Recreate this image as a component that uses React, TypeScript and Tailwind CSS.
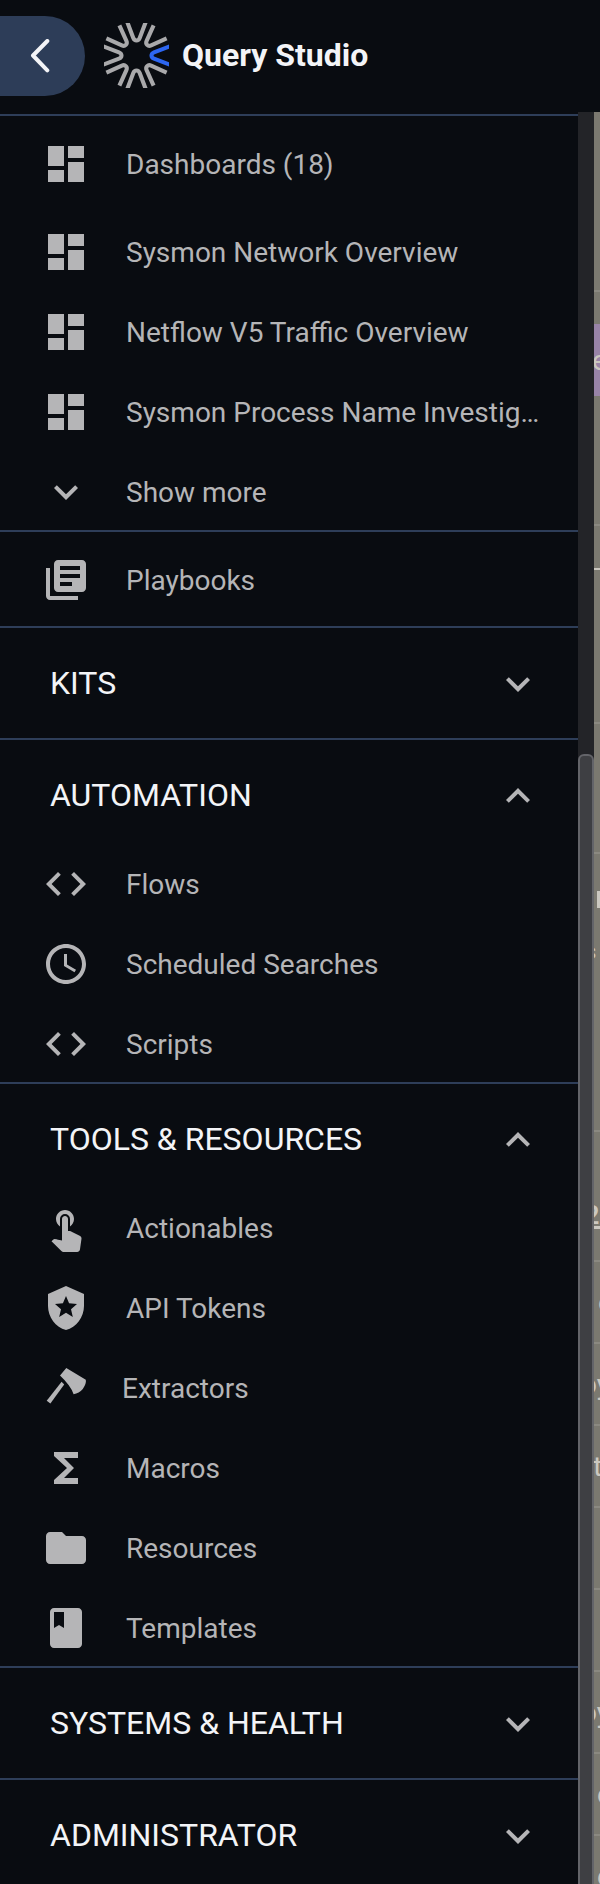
import type { ReactNode } from "react";
import {
  MdBook,
  MdCode,
  MdDashboard,
  MdExpandLess,
  MdExpandMore,
  MdFolder,
  MdFunctions,
  MdLibraryBooks,
  MdLocalPolice,
  MdSchedule,
  MdTouchApp,
} from "react-icons/md";

const ICON = "size-12 shrink-0";

function AxeIcon() {
  return (
    <svg viewBox="0 0 48 48" className={ICON} fill="currentColor">
      <path d="M24.3 4L43.8 15.8Q44.6 19.5 40.8 25Q37 29.3 31.6 30.2Q28.5 21.5 18 11.6Z" />
      <path d="M19.6 17.8L22.2 20.4L8.4 39.5L4.7 36.7Z" />
    </svg>
  );
}

const RAY = "M33.4 -9.2L17.5 -3.2C14.2 -1.9 14.2 1.9 17.5 3.2L33.4 9.2";

function Logo() {
  return (
    <svg viewBox="-32.5 -32.5 65 65" className="size-[65px] overflow-hidden" fill="none" strokeWidth="4.1">
      {[45, 90, 135, 180, 225, 270, 315, 0].map((angle) => (
        <path key={angle} d={RAY} transform={`rotate(${angle})`} stroke={angle === 0 ? "#2d66f0" : "#a9a9ab"} />
      ))}
    </svg>
  );
}

function Item({ icon, label, last, gap = "gap-9" }: { icon: ReactNode; label: string; last?: boolean; gap?: string }) {
  return (
    <div className={`flex items-center pl-[42px] pr-9 text-[#b5b5b7] ${gap} ${last ? "h-[78px] pt-0.5" : "h-20"}`}>
      {icon}
      <span className="truncate pt-0.5 text-[28px] leading-10">{label}</span>
    </div>
  );
}

function SectionTitle({ title, open }: { title: string; open?: boolean }) {
  return (
    <div className={`flex items-center justify-between pl-[50px] pr-9 ${open ? "h-[104px] pt-2" : "h-[110px] pt-0.5"}`}>
      <span className="pb-0.5 text-[32px] leading-10 text-[#f3f4f7]">{title}</span>
      {open ? <MdExpandLess className="size-12 text-[#b5b5b7]" /> : <MdExpandMore className="size-12 text-[#b5b5b7]" />}
    </div>
  );
}

function Group({ children, className = "" }: { children: ReactNode; className?: string }) {
  return <section className={`border-b-2 border-[#2e3e59] ${className}`}>{children}</section>;
}

function TableCell({ text, indent = "" }: { text?: string; indent?: string }) {
  return (
    <div className="h-[82px] shrink-0 border-b-2 border-[#8b8981] pt-[25px]">
      {text && <span className={`block text-[28px] leading-8 ${indent}`}>{text}</span>}
    </div>
  );
}

function PageBehind() {
  return (
    <div className="flex w-1.5 flex-col overflow-hidden bg-[#7b7970] text-[#cbc8c0]">
      <div className="h-[180px] shrink-0 border-b-2 border-[#8b8981]" />
      <div className="mt-8 flex h-[72px] shrink-0 items-center bg-[#9984a8] pt-0.5">
        <span className="-ml-0.5 text-[28px] leading-8">e</span>
      </div>
      <div className="h-[130px] shrink-0 border-b-2 border-[#8b8981]" />
      <div className="h-11 shrink-0 border-b-2 border-[#cbc8c0]" />
      <div className="h-[154px] shrink-0 border-b-2 border-[#8b8981]" />
      <div className="h-[130px] shrink-0 border-b-2 border-[#8b8981]" />
      <div className="flex h-[278px] shrink-0 flex-col gap-7 border-b-2 border-[#8b8981] pt-[37px]">
        <div className="ml-[3px] h-[17px] w-[3px] bg-[#cbc8c0]" />
        <span className="-ml-[9px] text-[22px] leading-8">s</span>
      </div>
      <div className="h-[130px] shrink-0 border-b-2 border-[#8b8981] pt-[72px]">
        <div className="border-b-[3px] border-[#cbc8c0]">
          <span className="-ml-[9px] block pt-0.5 text-[25px] font-bold leading-5">2</span>
        </div>
      </div>
      <TableCell text="o" indent="ml-1" />
      <TableCell text="oy" indent="-ml-[13px]" />
      <TableCell text="t" indent="-ml-px" />
      <TableCell />
      <TableCell />
      <TableCell text="oy" indent="-ml-[13px]" />
      <TableCell text="o" indent="ml-[3px]" />
      <TableCell text="o" indent="ml-[3px]" />
    </div>
  );
}

export default function App() {
  return (
    <div className="flex h-[1884px] w-[600px] flex-col overflow-hidden bg-[#090c11] font-[Roboto,sans-serif]">
      <header className="flex h-28 shrink-0 items-center">
        <button className="flex h-20 w-[85px] items-center rounded-r-full bg-[#2d3d58] pl-[30px]" aria-label="Back">
          <svg viewBox="0 0 20 34" className="h-[34px] w-5" fill="none" stroke="#f3f4f7" strokeWidth="4" strokeLinecap="round" strokeLinejoin="round">
            <path d="M17.3 2L3 16.5L17.3 31.3" />
          </svg>
        </button>
        <div className="ml-[19px] flex items-center gap-[13px] pb-px">
          <Logo />
          <h1 className="pb-px text-[32px] font-bold leading-10 text-[#f3f4f7]">Query Studio</h1>
        </div>
      </header>
      <div className="flex min-h-0 flex-1">
        <nav className="w-[578px] overflow-hidden pt-0.5">
          <Group className="border-t-2">
            <div className="pb-2 pt-2">
              <Item icon={<MdDashboard className={ICON} />} label="Dashboards (18)" />
            </div>
            <Item icon={<MdDashboard className={ICON} />} label="Sysmon Network Overview" />
            <Item icon={<MdDashboard className={ICON} />} label="Netflow V5 Traffic Overview" />
            <Item icon={<MdDashboard className={ICON} />} label="Sysmon Process Name Investig…" />
            <Item icon={<MdExpandMore className={ICON} />} label="Show more" last />
          </Group>
          <Group className="pb-1.5 pt-2">
            <Item icon={<MdLibraryBooks className={ICON} />} label="Playbooks" />
          </Group>
          <Group>
            <SectionTitle title="KITS" />
          </Group>
          <Group>
            <SectionTitle title="AUTOMATION" open />
            <Item icon={<MdCode className={ICON} />} label="Flows" />
            <Item icon={<MdSchedule className={ICON} />} label="Scheduled Searches" />
            <Item icon={<MdCode className={ICON} />} label="Scripts" last />
          </Group>
          <Group>
            <SectionTitle title="TOOLS & RESOURCES" open />
            <Item icon={<MdTouchApp className={ICON} />} label="Actionables" />
            <Item icon={<MdLocalPolice className={ICON} />} label="API Tokens" />
            <Item icon={<AxeIcon />} label="Extractors" gap="gap-8" />
            <Item icon={<MdFunctions className={ICON} />} label="Macros" />
            <Item icon={<MdFolder className={ICON} />} label="Resources" />
            <Item icon={<MdBook className={ICON} />} label="Templates" last />
          </Group>
          <Group>
            <SectionTitle title="SYSTEMS & HEALTH" />
          </Group>
          <SectionTitle title="ADMINISTRATOR" />
        </nav>
        <div className="w-4 overflow-hidden bg-[#232428] pt-[642px]">
          <div className="h-[1300px] rounded-md border-2 border-[#636469] bg-[#3e3f43]" />
        </div>
        <PageBehind />
      </div>
    </div>
  );
}
